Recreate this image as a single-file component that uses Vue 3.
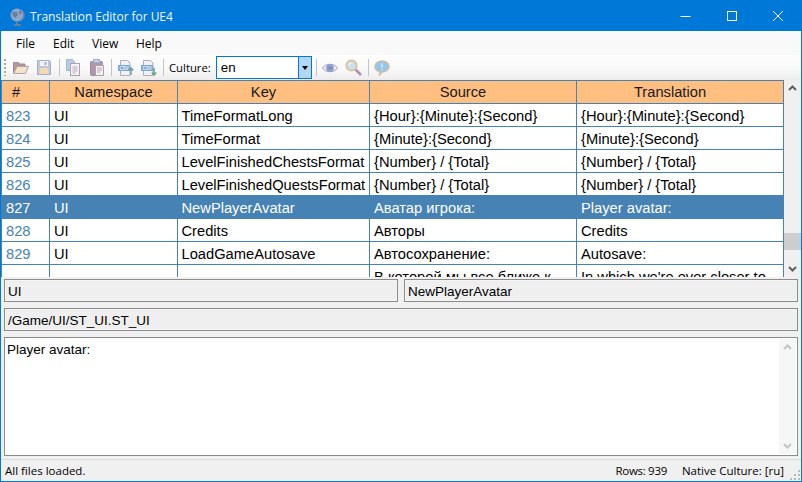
<script setup>
const rows = [
  { n: 823, ns: 'UI', key: 'TimeFormatLong', src: '{Hour}:{Minute}:{Second}', tr: '{Hour}:{Minute}:{Second}' },
  { n: 824, ns: 'UI', key: 'TimeFormat', src: '{Minute}:{Second}', tr: '{Minute}:{Second}' },
  { n: 825, ns: 'UI', key: 'LevelFinishedChestsFormat', src: '{Number} / {Total}', tr: '{Number} / {Total}' },
  { n: 826, ns: 'UI', key: 'LevelFinishedQuestsFormat', src: '{Number} / {Total}', tr: '{Number} / {Total}' },
  { n: 827, ns: 'UI', key: 'NewPlayerAvatar', src: 'Аватар игрока:', tr: 'Player avatar:', selected: true },
  { n: 828, ns: 'UI', key: 'Credits', src: 'Авторы', tr: 'Credits' },
  { n: 829, ns: 'UI', key: 'LoadGameAutosave', src: 'Автосохранение:', tr: 'Autosave:' },
]
const menus = ['File', 'Edit', 'View', 'Help']
</script>

<template>
  <div class="window">
    <header class="titlebar">
      <svg class="globe" width="18" height="20" viewBox="0 0 18 20">
        <circle cx="8" cy="8" r="6.5" fill="#8fa6c8" />
        <path d="M3 5h5l1 3-3 3-2-2zM10 3l3 2-1 3-2-2z" fill="#6c7fa3" />
        <path d="M13 3a7.5 7.5 0 0 1-1 11.500" fill="none" stroke="#7d8694" stroke-width="1" />
        <path d="M8 15v2M5 18h7" stroke="#7d8694" stroke-width="1.500" fill="none" />
      </svg>
      <span class="title">Translation Editor for UE4</span>
      <div class="controls">
        <svg width="46" height="30" viewBox="0 0 46 30"><path d="M17.500 15.500h10" stroke="#fff" /></svg>
        <svg width="46" height="30" viewBox="0 0 46 30"><rect x="18.500" y="10.500" width="9" height="9" fill="none" stroke="#fff" /></svg>
        <svg width="46" height="30" viewBox="0 0 46 30"><path d="M18 10l10 10M28 10l-10 10" stroke="#fff" /></svg>
      </div>
    </header>

    <nav class="menubar">
      <span v-for="m in menus" :key="m" class="menu">{{ m }}</span>
    </nav>

    <div class="toolbar">
      <i class="grip"></i>
      <svg class="ic ic-open" width="16" height="13" viewBox="0 0 16 13">
        <path d="M.5 1.500h5l1 1.500h5.500v2H4.500L.5 11.500z" fill="#b59aa0" stroke="#a48a92" />
        <path d="M4 5.500h11.500l-3 7H.8z" fill="#f3e3cb" stroke="#ba9fa3" />
      </svg>
      <svg class="ic ic-save" width="14" height="15" viewBox="0 0 14 15">
        <path d="M.5.500h12l1 1v13H.5z" fill="#bcc8de" stroke="#a5aecb" />
        <rect x="3" y="1" width="8" height="5" fill="#f2f3f7" />
        <rect x="7.500" y="2" width="2" height="3" fill="#a5aecb" />
        <rect x="2.500" y="8" width="9" height="6" fill="#f5d9b3" />
      </svg>
      <i class="sep sep1"></i>
      <svg class="ic ic-copy" width="14" height="17" viewBox="0 0 14 17">
        <path d="M.5.500h6l2 2v9H.5z" fill="#b6cde6" stroke="#9fb8d4" />
        <rect x="4.500" y="4.500" width="9" height="12" fill="#f6f3f6" stroke="#ae9fb2" />
        <path d="M6.500 8h5M6.500 10h5M6.500 12h5M6.500 14h3" stroke="#b7a8bc" />
      </svg>
      <svg class="ic ic-paste" width="14" height="17" viewBox="0 0 14 17">
        <rect x=".5" y="2.500" width="12" height="14" rx="1" fill="#b097a8" stroke="#a08aa0" />
        <rect x="3.500" y=".5" width="6" height="3" fill="#bcd0e6" stroke="#9fb0c8" />
        <path d="M5.500 6.500h8v10h-8z" fill="#f4efee" stroke="#ae9fb2" />
        <path d="M7 9h5M7 11h5M7 13h3" stroke="#b7a8bc" />
      </svg>
      <i class="sep sep2"></i>
      <svg class="ic ic-csv1" width="16" height="16" viewBox="0 0 16 16">
        <path d="M2.500.5h7l2.500 2.500v12.500h-9.500z" fill="#f1f1f6" stroke="#b0abc2" />
        <rect x="0" y="5" width="12" height="6" fill="#7fa6d2" />
        <text class="csv" x="1.500" y="10">CSV</text>
        <path d="M13 15V8M10.800 10.500L13 8l2.200 2.500" stroke="#6aa3a8" fill="none" stroke-width="1.600" />
      </svg>
      <svg class="ic ic-csv2" width="16" height="16" viewBox="0 0 16 16">
        <path d="M2.500.5h7l2.500 2.500v12.500h-9.500z" fill="#f1f1f6" stroke="#b0abc2" />
        <rect x="0" y="5" width="12" height="6" fill="#7fa6d2" />
        <text class="csv" x="1.500" y="10">CSV</text>
        <path d="M13 8v7M10.800 12.500L13 15l2.200-2.500" stroke="#69a98a" fill="none" stroke-width="1.600" />
      </svg>
      <i class="sep sep3"></i>
      <span class="culture">Culture:</span>
      <div class="combo">
        <span class="combo-val">en</span>
        <span class="combo-btn"><b></b></span>
      </div>
      <i class="sep sep4"></i>
      <svg class="ic ic-eye" width="16" height="12" viewBox="0 0 16 12">
        <path d="M.5 6C3 1 13 1 15.500 6 13 11 3 11 .5 6z" fill="#f0e9ef" stroke="#b7a0bb" />
        <circle cx="8" cy="6" r="3.900" fill="#86a5d4" />
        <circle cx="8" cy="6" r="1.700" fill="#9a7fa6" />
      </svg>
      <svg class="ic ic-search" width="17" height="17" viewBox="0 0 17 17">
        <path d="M10 10l6 6" stroke="#a991bb" stroke-width="2.500" />
        <circle cx="6.500" cy="6.500" r="5.200" fill="#c6e0f5" stroke="#e3c193" stroke-width="1.800" />
        <path d="M4 6.500a2.500 2.500 0 0 1 2.500-2.500" stroke="#fff" fill="none" />
      </svg>
      <i class="sep sep5"></i>
      <svg class="ic ic-bubble" width="16" height="16" viewBox="0 0 16 16">
        <path d="M8 .8c4 0 7.200 2.400 7.200 5.700S12 12.200 8 12.200L5.500 15.400v-3.600C3 11.200.8 9.400.8 6.500.8 3.200 4 .8 8 .8z" fill="#94c6ec" stroke="#dcc09c" stroke-width="1.300" />
        <path d="M8 3.500v4M8 9v1" stroke="#e6f0f8" stroke-width="1.300" />
      </svg>
    </div>

    <section class="grid-wrap">
      <div class="grid">
        <div class="row head">
          <div class="cell c-n">#</div>
          <div class="cell c-ns">Namespace</div>
          <div class="cell c-k">Key</div>
          <div class="cell c-s">Source</div>
          <div class="cell c-t">Translation</div>
        </div>
        <div v-for="r in rows" :key="r.n" class="row" :class="{ selected: r.selected }">
          <div class="cell c-n num">{{ r.n }}</div>
          <div class="cell c-ns">{{ r.ns }}</div>
          <div class="cell c-k">{{ r.key }}</div>
          <div class="cell c-s">{{ r.src }}</div>
          <div class="cell c-t">{{ r.tr }}</div>
        </div>
        <div class="row tall">
          <div class="cell c-n"></div>
          <div class="cell c-ns"></div>
          <div class="cell c-k"></div>
          <div class="cell c-s">В которой мы все ближе к</div>
          <div class="cell c-t">In which we're ever closer to</div>
        </div>
      </div>
      <div class="vscroll">
        <svg width="17" height="17" viewBox="0 0 17 17"><path d="M5 10l3.500-3.500L12 10" fill="none" stroke="#606060" stroke-width="2" /></svg>
        <div class="track"><div class="thumb"></div></div>
        <svg width="17" height="17" viewBox="0 0 17 17"><path d="M5 7l3.500 3.500L12 7" fill="none" stroke="#606060" stroke-width="2" /></svg>
      </div>
    </section>

    <section class="details">
      <div class="field-row">
        <div class="field">UI</div>
        <div class="field">NewPlayerAvatar</div>
      </div>
      <div class="field">/Game/UI/ST_UI.ST_UI</div>
      <div class="textbox">
        <div class="text">Player avatar:</div>
        <div class="tb-scroll">
          <svg width="17" height="17" viewBox="0 0 17 17"><path d="M5 10l3.500-3.500L12 10" fill="none" stroke="#c4c4c4" stroke-width="2" /></svg>
          <svg width="17" height="17" viewBox="0 0 17 17"><path d="M5 7l3.500 3.500L12 7" fill="none" stroke="#c4c4c4" stroke-width="2" /></svg>
        </div>
      </div>
    </section>

    <footer class="statusbar">
      <span class="st-msg">All files loaded.</span>
      <span class="st-rows">Rows: 939</span>
      <span class="st-native">Native Culture: [ru]</span>
      <svg class="sizegrip" width="12" height="12" viewBox="0 0 12 12">
        <path d="M9 1h2v2H9zM5 5h2v2H5zM9 5h2v2H9zM1 9h2v2H1zM5 9h2v2H5zM9 9h2v2H9z" fill="#b8b8b8" />
      </svg>
    </footer>
  </div>
</template>

<style>
html, body { margin: 0; padding: 0; background: #f0f0f0; }
</style>

<style scoped>
.window {
  width: 802px;
  height: 482px;
  box-sizing: border-box;
  border: 1px solid #0078d7;
  background: #f0f0f0;
  display: flex;
  flex-direction: column;
  overflow: hidden;
  font-family: "Liberation Sans", Arial, sans-serif;
  color: #000;
}
.titlebar {
  height: 30px;
  flex: none;
  background: #0078d7;
  display: flex;
  align-items: center;
  padding-left: 8px;
  color: #fff;
  font: 12px "Open Sans", "Noto Sans", sans-serif;
}
.globe { margin-right: 3px; margin-top: 1px; }
.title { opacity: .95; letter-spacing: -.05px; }
.controls { margin-left: auto; display: flex; }
.menubar {
  height: 24px;
  flex: none;
  background: #f9f9f9;
  display: flex;
  align-items: center;
  padding-left: 15px;
  font: 12px "Open Sans", "Noto Sans", sans-serif;
}
.menu:nth-child(1) { width: 37px; }
.menu:nth-child(2) { width: 39px; }
.menu:nth-child(3) { width: 44px; }
.toolbar {
  height: 25px;
  flex: none;
  background: linear-gradient(#fefefe, #f8f8f8 60%, #ececec);
  display: flex;
  align-items: center;
}
.grip {
  width: 2px;
  height: 17px;
  margin-left: 3px;
  background: repeating-linear-gradient(#a8a8a8 0 2px, transparent 2px 4px);
}
.ic { flex: none; display: block; }
.csv { font: bold 4.500px "Liberation Sans", Arial, sans-serif; fill: #eaf2fa; }
.ic-open { margin-left: 7px; }
.ic-save { margin-left: 8px; }
.sep { width: 1px; height: 17px; flex: none; background: #c4c4c4; }
.sep1 { margin-left: 8px; }
.ic-copy { margin-left: 6px; }
.ic-paste { margin-left: 10px; }
.sep2 { margin-left: 7px; }
.ic-csv1 { margin-left: 6px; }
.ic-csv2 { margin-left: 7px; }
.sep3 { margin-left: 6px; }
.culture {
  margin-left: 5px;
  font: 11.300px "Open Sans", "Noto Sans", sans-serif;
}
.combo {
  margin-left: 5px;
  width: 96px;
  height: 23px;
  box-sizing: border-box;
  border: 1px solid #0078d7;
  background: #fff;
  display: flex;
}
.combo-val {
  flex: 1;
  padding: 3px 0 0 4px;
  font: 13.330px "Liberation Sans", Arial, sans-serif;
}
.combo-btn {
  width: 12px;
  border-left: 1px solid #0078d7;
  background: #b3d7f3;
  display: flex;
  align-items: center;
  justify-content: center;
}
.combo-btn b {
  width: 0;
  height: 0;
  border: 3.500px solid transparent;
  border-top: 4px solid #000;
  border-bottom: 0;
}
.sep4 { margin-left: 4px; }
.ic-eye { margin-left: 5px; }
.ic-search { margin-left: 7px; margin-top: -1px; }
.sep5 { margin-left: 6px; }
.ic-bubble { margin-left: 5px; }

.grid-wrap {
  height: 197px;
  flex: none;
  display: flex;
  overflow: hidden;
  background: #fff;
}
.grid { width: 783px; flex: none; font-size: 14.700px; }
.row {
  display: flex;
  height: 23px;
  box-sizing: border-box;
  border-bottom: 1px solid #4682b4;
  background: #fff;
}
.row.head {
  border-top: 1px solid #4682b4;
  height: 24px;
  background: #ffbf80;
  color: #1a1a1a;
}
.cell {
  box-sizing: border-box;
  border-right: 1px solid #4682b4;
  padding: 3px 0 0 4px;
  white-space: nowrap;
  overflow: hidden;
  line-height: 18px;
}
.head .cell { text-align: center; padding: 2px 0 0; }
.head .c-n { text-align: left; padding-left: 10px; }
.head .c-k, .head .c-s, .head .c-t { padding-right: 20px; }
.c-n { width: 49px; border-left: 1px solid #4682b4; }
.c-ns { width: 128px; }
.c-k { width: 192px; padding-left: 3.500px; }
.c-s { width: 207px; }
.c-t { width: 207px; }
.num { color: #4682b4; }
.row.selected { background: #4682b4; }
.selected .cell { color: #fff; }
.row.tall { height: 46px; }
.vscroll {
  width: 17px;
  flex: none;
  background: #f0f0f0;
  display: flex;
  flex-direction: column;
  height: 197px;
}
.vscroll svg { display: block; flex: none; }
.track { flex: 1; padding-top: 136px; }
.thumb { height: 17px; background: #cdcdcd; }

.details {
  flex: 1;
  display: flex;
  flex-direction: column;
  gap: 6px;
  padding: 2px 3px 3px;
  box-sizing: border-box;
  min-height: 0;
}
.field-row { display: flex; gap: 6px; }
.field-row .field { flex: 1; }
.field {
  height: 23px;
  box-sizing: border-box;
  border: 1px solid #8c8c8c;
  background: #efefef;
  padding: 3px 2px 0 3px;
  font-size: 13.500px;
  line-height: 17px;
  white-space: nowrap;
  box-shadow: inset 0 0 0 1px #f4f4f4;
}
.textbox {
  flex: 1;
  min-height: 0;
  box-sizing: border-box;
  border: 1px solid #8c8c8c;
  background: #fff;
  display: flex;
  justify-content: space-between;
}
.text { padding: 3px 2px; font-size: 13.500px; line-height: 17px; }
.tb-scroll {
  width: 17px;
  margin: 1px;
  background: #f6f6f6;
  display: flex;
  flex-direction: column;
  justify-content: space-between;
}
.tb-scroll svg { display: block; }

.statusbar {
  height: 22px;
  flex: none;
  border-top: 1px solid #dcdcdc;
  box-sizing: border-box;
  display: flex;
  align-items: center;
  padding-left: 4px;
  font: 11.500px "Open Sans", "Noto Sans", sans-serif;
  position: relative;
}
.st-msg { margin-right: auto; }
.st-rows { letter-spacing: -.3px; }
.st-native { margin: 0 17px 0 15px; }
.sizegrip { position: absolute; right: 0; bottom: 0; }
</style>
